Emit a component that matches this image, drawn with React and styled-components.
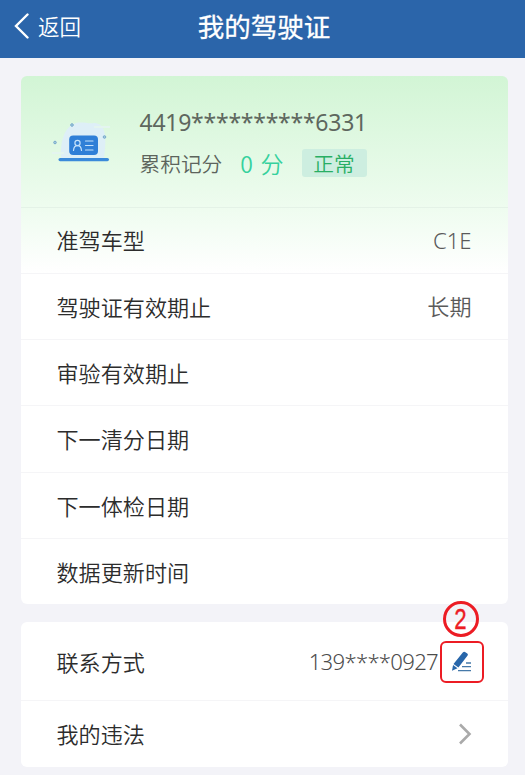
import React from "react"
import styled, { createGlobalStyle } from "styled-components"

const GlobalStyle = createGlobalStyle`
  * {
    box-sizing: border-box;
  }
  body {
    margin: 0;
    background: #f3f3f8;
    font-family: "Noto Sans CJK SC", sans-serif;
    font-weight: 350;
    color: #2c2c2c;
  }
`

const Page = styled.div`
  height: 775px;
  overflow: hidden;
  background: #f3f3f8;
`

const Header = styled.header`
  display: grid;
  grid-template-columns: 1fr auto 1fr;
  height: 57.5px;
  padding: 0 11px 5.5px 14px;
  align-items: center;
  background: #2b65aa;
  color: #fff;
`

const Back = styled.div`
  display: flex;
  align-items: center;
  gap: 8px;
  font-size: 21.5px;
  line-height: 32px;
  svg {
    display: block;
  }
`

const Title = styled.h1`
  margin: 0;
  font-size: 26.5px;
  line-height: 40px;
  font-weight: 400;
  -webkit-text-stroke: 0.3px #fff;
`

const Main = styled.main`
  display: flex;
  flex-direction: column;
  gap: 18px;
  padding: 18px 17.5px 0 20.5px;
`

const Card = styled.section`
  border-radius: 6px;
  background: ${props => (props.$tinted ? "linear-gradient(#d2f5d5 0, #eefcef 131px, #fff 197px) #fff" : "#fff")};
`

const Summary = styled.div`
  display: flex;
  height: 131px;
  padding: 27px 0 0 31px;
  gap: 30px;
  svg {
    margin-top: 1px;
  }
`

const Info = styled.div`
  display: flex;
  flex-direction: column;
`

const Numbers = styled.span`
  font-family: "Noto Sans", "Noto Sans CJK SC", sans-serif;
  letter-spacing: ${props => props.$spacing || 0}px;
`

const Licence = styled.div`
  height: 37px;
  font-size: 23px;
  line-height: 36px;
  font-weight: 400;
  color: #5e675e;
`

const Points = styled.div`
  display: flex;
  align-items: center;
  height: 46px;
  font-size: 20.7px;
  color: #5c645c;
`

const Score = styled.span`
  margin-left: 18px;
  font-size: 23px;
  word-spacing: 2.5px;
  color: #36d19d;
`

const Status = styled.span`
  width: 65px;
  height: 28px;
  margin-left: 18px;
  border-radius: 3px;
  background: #cdeee0;
  color: #28ae64;
  line-height: 28px;
  text-align: center;
`

const Row = styled.div`
  display: flex;
  justify-content: space-between;
  align-items: center;
  height: ${props => props.$height || 66.3}px;
  padding: 0 36px;
  border-top: ${props => (props.$first ? "none" : "1px solid rgba(0, 0, 40, 0.04)")};
  font-size: 22.1px;
  line-height: 32px;
`

const Label = styled.span`
  margin-bottom: 1.5px;
`

const Value = styled.span`
  display: flex;
  align-items: center;
  color: #5a5a5a;
`

const Phone = styled.span`
  margin: 0 2px 1px 0;
  color: #4c4c4c;
`

const EditButton = styled.button`
  position: relative;
  display: flex;
  width: 44px;
  height: 42px;
  margin: 1px -12.5px 0 0;
  padding: 0;
  align-items: center;
  justify-content: center;
  background: none;
  border: 2.5px solid #ec1c24;
  border-radius: 6px;
`

const Step = styled.span`
  position: absolute;
  top: -42px;
  left: 0.5px;
  display: flex;
  width: 36px;
  height: 36px;
  align-items: center;
  justify-content: center;
  border: 3.5px solid #ec1c24;
  border-radius: 50%;
  color: #ec1c24;
  font-family: "Liberation Sans", sans-serif;
  font-size: 30px;
  line-height: 30px;
  span {
    transform: scaleX(0.74);
    -webkit-text-stroke: 0.4px #ec1c24;
  }
`

const LicenceIcon = () => (
  <svg width="58" height="60" viewBox="0 0 58 60">
    <path d="M9 54 C8 39 12 25 20 21 C27 16 34 20 42 19 C54 19 55 34 52 54Z" fill="#deeff7" />
    <path d="M0 48h12v2H0zM42 22h16v2H42z" fill="#e4f5ef" />
    <rect x="17.2" y="31.5" width="28.8" height="19.5" rx="4" fill="#2f7fd7" />
    <g fill="none" stroke="#c4e1fb" strokeWidth="1.2" strokeLinecap="round">
      <circle cx="25.5" cy="39" r="2.6" />
      <path d="M21.5 46.5c.5-6.5 7.5-6.5 8 0M33.5 37h7.5M33.5 41.5h7.5M33.5 46h7.5" />
    </g>
    <rect x="6.5" y="54" width="50.5" height="3.2" rx="1.6" fill="#3b8ada" />
    <g fill="#a8cddd" stroke="#77a9cd">
      <circle cx="20" cy="21" r="1.3" />
      <circle cx="3" cy="38.5" r="1.3" />
      <circle cx="52.5" cy="33" r="1.3" />
    </g>
  </svg>
)

const EditIcon = () => (
  <svg width="22" height="22" viewBox="0 0 22 22">
    <path d="M11.8 1.6Q12.8.2 14 .9L16.3 2.6Q17.4 3.5 16.6 4.6L7.4 16.5 2.5 13z" fill="#2866aa" />
    <path d="m2.1 14 4.4 3.2L1 19.8z" fill="#2866aa" />
    <path d="M15 12h5M11 15.7h9M7 19.6h13" stroke="#4679a9" strokeWidth="1.3" />
  </svg>
)

const rows = [
  { label: "准驾车型", value: "C1E" },
  { label: "驾驶证有效期止", value: "长期" },
  { label: "审验有效期止" },
  { label: "下一清分日期" },
  { label: "下一体检日期" },
  { label: "数据更新时间" },
]

const App = () => {
  return (
    <>
      <GlobalStyle />
      <Page>
        <Header>
          <Back>
            <svg width="16" height="26" viewBox="0 0 16 26">
              <path d="M13.5 1.5 2 13l11.5 11.5" fill="none" stroke="#fff" strokeWidth="2.4" strokeLinecap="round" />
            </svg>
            返回
          </Back>
          <Title>我的驾驶证</Title>
        </Header>

        <Main>
          <Card $tinted>
            <Summary>
              <LicenceIcon />
              <Info>
                <Licence><Numbers $spacing={-0.25}>4419**********6331</Numbers></Licence>
                <Points>
                  累积记分
                  <Score>0 分</Score>
                  <Status>正常</Status>
                </Points>
              </Info>
            </Summary>
            {rows.map(row => (
              <Row key={row.label}>
                <Label>{row.label}</Label>
                <Value><Numbers>{row.value}</Numbers></Value>
              </Row>
            ))}
          </Card>

          <Card>
            <Row $first $height={78}>
              <Label>联系方式</Label>
              <Value>
                <Phone><Numbers $spacing={-0.7}>139****0927</Numbers></Phone>
                <EditButton aria-label="edit">
                  <EditIcon />
                  <Step><span>2</span></Step>
                </EditButton>
              </Value>
            </Row>
            <Row>
              <Label>我的违法</Label>
              <svg width="14" height="22" viewBox="0 0 14 22">
                <path d="m2 1.5 9.5 9.5L2 20.5" fill="none" stroke="#aaa" strokeWidth="2.6" />
              </svg>
            </Row>
          </Card>
        </Main>
      </Page>
    </>
  )
}

export default App
